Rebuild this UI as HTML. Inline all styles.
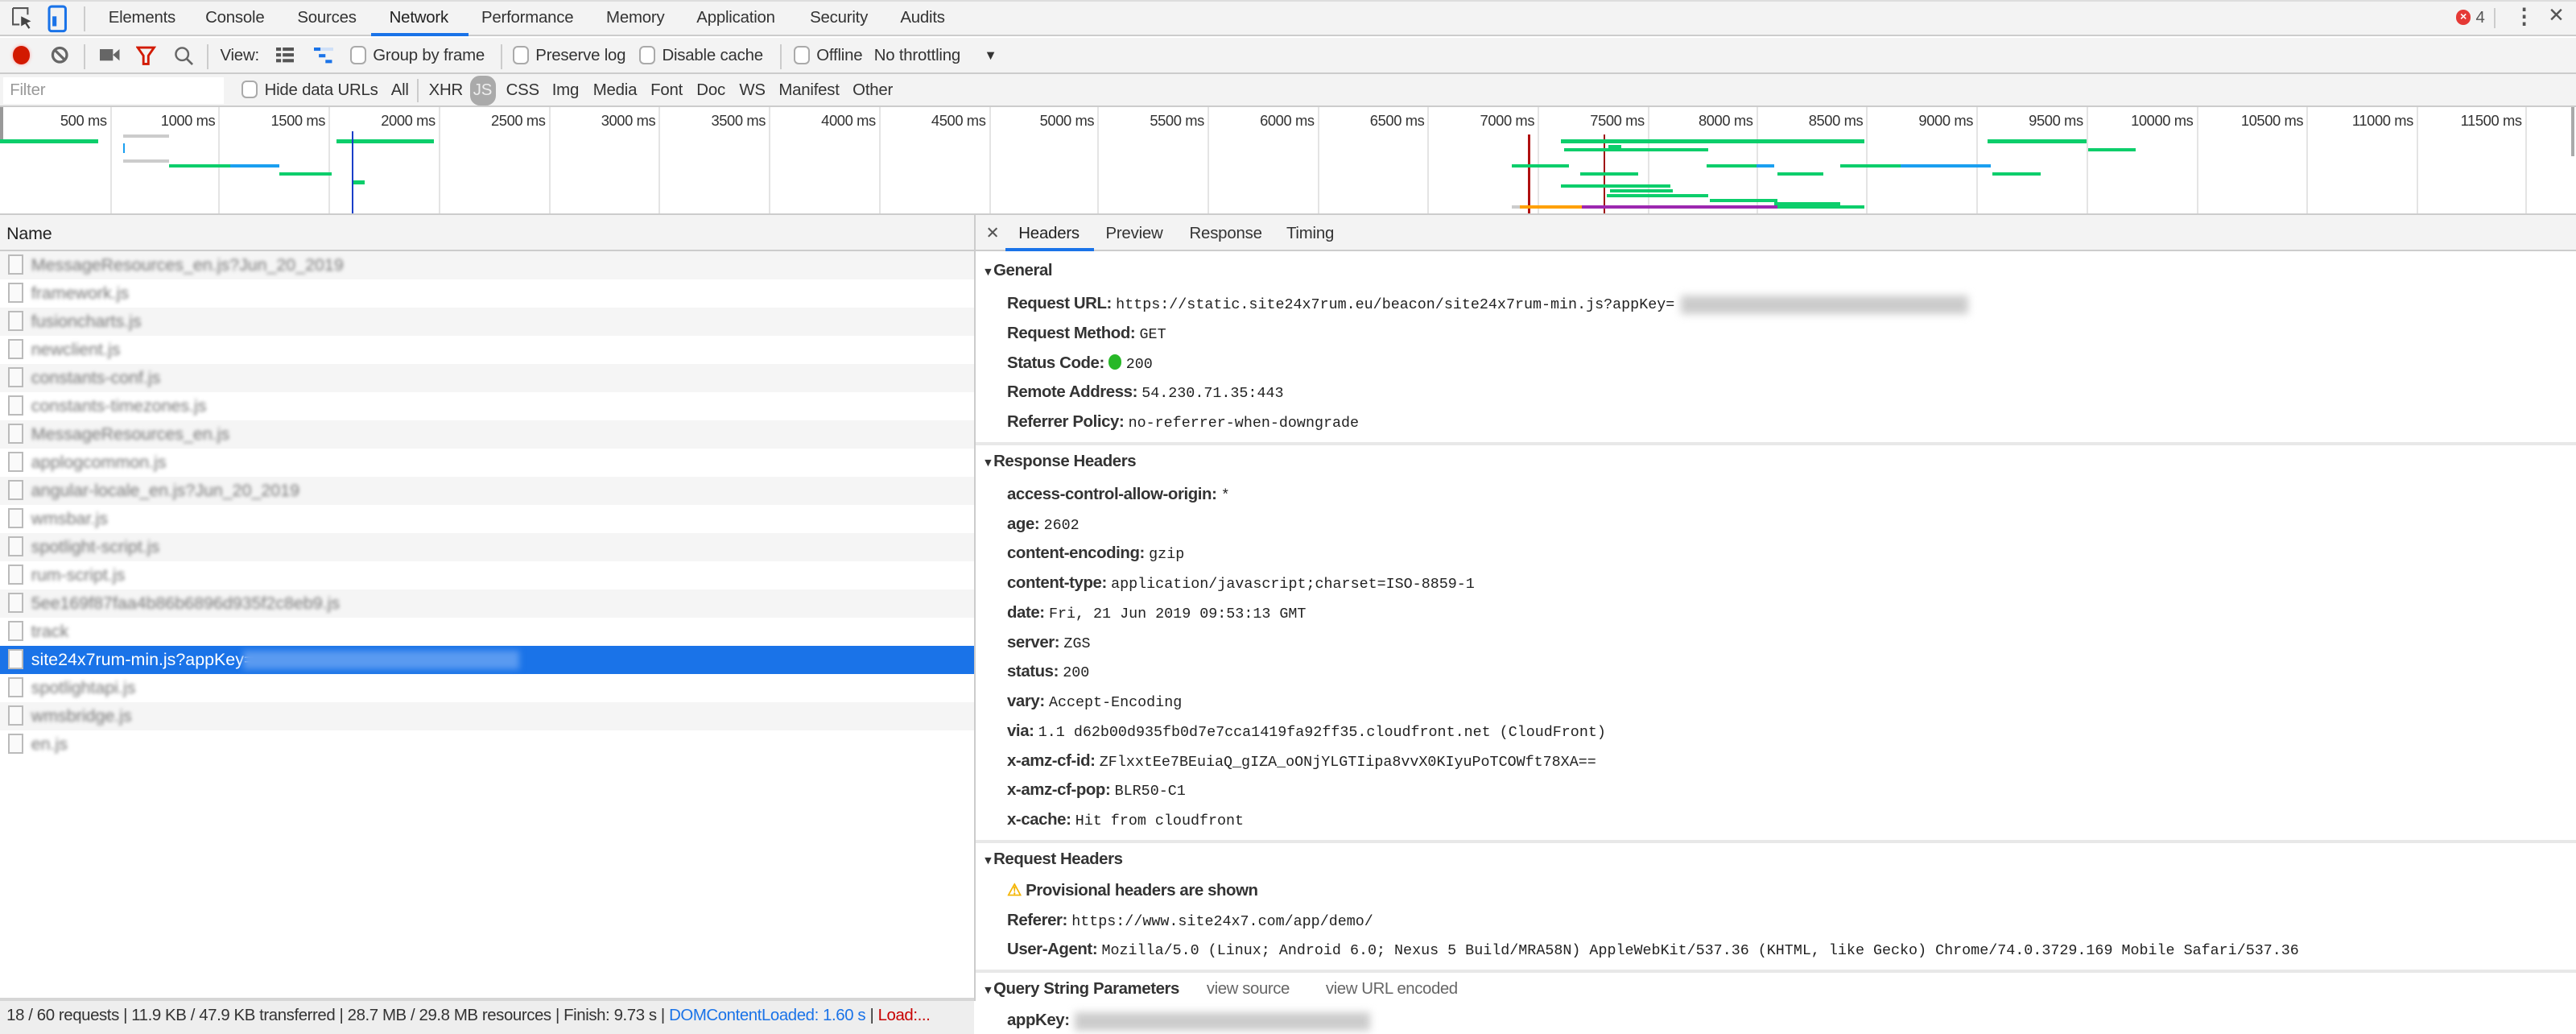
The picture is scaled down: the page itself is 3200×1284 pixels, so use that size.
<!DOCTYPE html>
<html><head><meta charset="utf-8"><style>
*{box-sizing:border-box;margin:0;padding:0}
html,body{width:3200px;height:1284px;overflow:hidden;background:#fff}
#w{zoom:2.0408;width:1568px;height:629px;position:relative;overflow:hidden;font-family:"Liberation Sans",sans-serif;font-size:10px;color:#333}
.a{position:absolute;white-space:nowrap}
.bar{position:absolute;left:0;width:1568px;background:#f3f3f3}
.cb{position:absolute;width:10px;height:11px;border:1px solid #aaa;border-radius:3px;background:#fff}
.t{position:absolute;line-height:14px;white-space:nowrap;font-size:10px;letter-spacing:-0.1px}
.gl{position:absolute;top:65px;height:65px;width:1px;background:#e4e4e4}
.gt{position:absolute;top:68px;font-size:9px;color:#333;text-align:right;width:60px;letter-spacing:-0.2px}
.b{position:absolute;height:2px}
.g{background:#0cce6b}.bl{background:#1a9ff0}.gr{background:#ccc}
.row{position:absolute;left:0;width:593px;height:17.15px}
.row .ic{position:absolute;left:5px;top:2px;width:9px;height:12px;border:1px solid #bbb;background:#fafafa}
.row .nm{position:absolute;left:19px;top:1px;line-height:15px;color:#777;filter:blur(1.1px);font-size:10.5px}
.lab{position:absolute;left:613px;font-weight:bold;font-size:10px;color:#333;white-space:nowrap;line-height:14px;letter-spacing:-0.2px}
.lab span{font-weight:normal;font-family:"Liberation Mono",monospace;font-size:9px;letter-spacing:0;color:#222}
.sec{position:absolute;left:598px;font-weight:bold;font-size:10px;color:#333;line-height:14px;letter-spacing:-0.2px}
.sep{position:absolute;left:594px;width:974px;height:2px;background:#e8e8e8}
</style></head><body><div id="w">
<!-- top tab bar -->
<div class="bar" style="top:0;height:22px;border-bottom:1px solid #ccc;border-top:1px solid #ddd"></div>
<svg class="a" style="left:7px;top:4px" width="14" height="15" viewBox="0 0 14 15"><path d="M1 1h9v4M1 1v10h4" fill="none" stroke="#555" stroke-width="1"/><path d="M6 6l6 3-2.5 1 2 3-1 .6-2-3L6 12z" fill="#444"/></svg>
<svg class="a" style="left:29px;top:3px" width="12" height="17" viewBox="0 0 12 17"><rect x="1" y="1" width="10" height="15" rx="1.5" fill="none" stroke="#1a73e8" stroke-width="1.5"/><rect x="3" y="7" width="2.5" height="6" fill="#1a73e8"/></svg>
<div class="a" style="left:51px;top:4px;width:1px;height:15px;background:#ccc"></div>
<div class="t" style="left:66px;top:4px">Elements</div>
<div class="t" style="left:125px;top:4px">Console</div>
<div class="t" style="left:181px;top:4px">Sources</div>
<div class="t" style="left:237px;top:4px;color:#222">Network</div>
<div class="a" style="left:226px;top:20px;width:59px;height:2px;background:#1a73e8"></div>
<div class="t" style="left:293px;top:4px">Performance</div>
<div class="t" style="left:369px;top:4px">Memory</div>
<div class="t" style="left:424px;top:4px">Application</div>
<div class="t" style="left:493px;top:4px">Security</div>
<div class="t" style="left:548px;top:4px">Audits</div>
<div class="a" style="left:1495px;top:6px;width:9px;height:9px;border-radius:50%;background:#e53935;color:#fff;font-size:7px;line-height:9px;text-align:center;font-weight:bold">×</div>
<div class="t" style="left:1507px;top:4px;color:#555">4</div>
<div class="a" style="left:1518px;top:5px;width:1px;height:12px;background:#ccc"></div>
<div class="t" style="left:1530px;top:3px;font-size:13px;font-weight:bold;color:#555">⋮</div>
<div class="t" style="left:1551px;top:3px;font-size:12px;color:#555">✕</div>
<!-- toolbar -->
<div class="bar" style="top:23px;height:22px;border-bottom:1px solid #ccc"></div>
<div class="a" style="left:8px;top:28px;width:10px;height:11px;border-radius:50%;background:#d21a00;box-shadow:0 0 2px #f99"></div>
<svg class="a" style="left:31px;top:28px" width="11" height="11" viewBox="0 0 11 11"><circle cx="5.5" cy="5.5" r="4.3" fill="none" stroke="#666" stroke-width="1.6"/><path d="M2.5 2.5l6 6" stroke="#666" stroke-width="1.6"/></svg>
<div class="a" style="left:51px;top:27px;width:1px;height:15px;background:#ccc"></div>
<svg class="a" style="left:61px;top:29px" width="12" height="9" viewBox="0 0 12 9"><rect x="0" y="1" width="8" height="7" fill="#666"/><path d="M8 4.5L12 1v7z" fill="#666"/></svg>
<svg class="a" style="left:83px;top:28px" width="12" height="12" viewBox="0 0 12 12"><path d="M1 1h10L7.5 6v5h-3V6z" fill="none" stroke="#d21a00" stroke-width="1.4"/></svg>
<svg class="a" style="left:106px;top:28px" width="12" height="12" viewBox="0 0 12 12"><circle cx="5" cy="5" r="3.8" fill="none" stroke="#666" stroke-width="1.2"/><path d="M7.8 7.8l3.5 3.5" stroke="#666" stroke-width="1.3"/></svg>
<div class="a" style="left:126px;top:27px;width:1px;height:15px;background:#ccc"></div>
<div class="t" style="left:134px;top:27px">View:</div>
<svg class="a" style="left:168px;top:29px" width="11" height="9" viewBox="0 0 11 9"><path d="M0 0h3v2H0zM4 0h7v2H4zM0 3.5h3v2H0zM4 3.5h7v2H4zM0 7h3v2H0zM4 7h7v2H4z" fill="#555"/></svg>
<svg class="a" style="left:191px;top:29px" width="12" height="10" viewBox="0 0 12 10"><rect x="0" y="0" width="4" height="2" fill="#1a73e8"/><rect x="4" y="0" width="8" height="2" fill="#cfe0f8"/><rect x="3" y="4" width="4" height="2" fill="#1a73e8"/><rect x="7" y="7.5" width="4" height="2" fill="#1a73e8"/></svg>
<div class="cb" style="left:213px;top:28px"></div>
<div class="t" style="left:227px;top:27px">Group by frame</div>
<div class="a" style="left:305px;top:27px;width:1px;height:15px;background:#ccc"></div>
<div class="cb" style="left:312px;top:28px"></div>
<div class="t" style="left:326px;top:27px">Preserve log</div>
<div class="cb" style="left:389px;top:28px"></div>
<div class="t" style="left:403px;top:27px">Disable cache</div>
<div class="a" style="left:475px;top:27px;width:1px;height:15px;background:#ccc"></div>
<div class="cb" style="left:483px;top:28px"></div>
<div class="t" style="left:497px;top:27px">Offline</div>
<div class="t" style="left:532px;top:27px">No throttling</div>
<div class="t" style="left:599px;top:27px;font-size:8px">▼</div>
<!-- filter row -->
<div class="bar" style="top:45px;height:20px;border-bottom:1px solid #ccc"></div>
<div class="a" style="left:2px;top:47px;width:134px;height:16px;background:#fff"></div>
<div class="t" style="left:6px;top:48px;color:#999">Filter</div>
<div class="cb" style="left:147px;top:49px"></div>
<div class="t" style="left:161px;top:48px">Hide data URLs</div>
<div class="t" style="left:238px;top:48px">All</div>
<div class="a" style="left:254px;top:48px;width:1px;height:14px;background:#ccc"></div>
<div class="t" style="left:261px;top:48px">XHR</div>
<div class="a" style="left:286px;top:46px;width:16px;height:18px;border-radius:6px;background:#aaa"></div>
<div class="t" style="left:288px;top:48px;color:#eee">JS</div>
<div class="t" style="left:308px;top:48px">CSS</div>
<div class="t" style="left:336px;top:48px">Img</div>
<div class="t" style="left:361px;top:48px">Media</div>
<div class="t" style="left:396px;top:48px">Font</div>
<div class="t" style="left:424px;top:48px">Doc</div>
<div class="t" style="left:450px;top:48px">WS</div>
<div class="t" style="left:474px;top:48px">Manifest</div>
<div class="t" style="left:519px;top:48px">Other</div>
<!-- timeline -->
<div class="a" style="left:0;top:65px;width:1568px;height:66px;background:#fff;border-bottom:1px solid #ccc"></div>
<div class="a" style="left:0;top:65px;width:2px;height:20px;background:#999"></div>
<div class="a" style="left:1565px;top:65px;width:2px;height:30px;background:#aaa"></div>
<div class="gl" style="left:67px"></div><div class="gt" style="left:5px">500 ms</div>
<div class="gl" style="left:133px"></div><div class="gt" style="left:71px">1000 ms</div>
<div class="gl" style="left:200px"></div><div class="gt" style="left:138px">1500 ms</div>
<div class="gl" style="left:267px"></div><div class="gt" style="left:205px">2000 ms</div>
<div class="gl" style="left:334px"></div><div class="gt" style="left:272px">2500 ms</div>
<div class="gl" style="left:401px"></div><div class="gt" style="left:339px">3000 ms</div>
<div class="gl" style="left:468px"></div><div class="gt" style="left:406px">3500 ms</div>
<div class="gl" style="left:535px"></div><div class="gt" style="left:473px">4000 ms</div>
<div class="gl" style="left:602px"></div><div class="gt" style="left:540px">4500 ms</div>
<div class="gl" style="left:668px"></div><div class="gt" style="left:606px">5000 ms</div>
<div class="gl" style="left:735px"></div><div class="gt" style="left:673px">5500 ms</div>
<div class="gl" style="left:802px"></div><div class="gt" style="left:740px">6000 ms</div>
<div class="gl" style="left:869px"></div><div class="gt" style="left:807px">6500 ms</div>
<div class="gl" style="left:936px"></div><div class="gt" style="left:874px">7000 ms</div>
<div class="gl" style="left:1003px"></div><div class="gt" style="left:941px">7500 ms</div>
<div class="gl" style="left:1069px"></div><div class="gt" style="left:1007px">8000 ms</div>
<div class="gl" style="left:1136px"></div><div class="gt" style="left:1074px">8500 ms</div>
<div class="gl" style="left:1203px"></div><div class="gt" style="left:1141px">9000 ms</div>
<div class="gl" style="left:1270px"></div><div class="gt" style="left:1208px">9500 ms</div>
<div class="gl" style="left:1337px"></div><div class="gt" style="left:1275px">10000 ms</div>
<div class="gl" style="left:1404px"></div><div class="gt" style="left:1342px">10500 ms</div>
<div class="gl" style="left:1471px"></div><div class="gt" style="left:1409px">11000 ms</div>
<div class="gl" style="left:1537px"></div><div class="gt" style="left:1475px">11500 ms</div>
<div class="b g" style="left:0;top:85px;width:60px"></div>
<div class="b gr" style="left:75px;top:82px;width:28px"></div>
<div class="b bl" style="left:75px;top:87px;width:1px;height:6px"></div>
<div class="b gr" style="left:75px;top:97px;width:28px"></div>
<div class="b g" style="left:103px;top:100px;width:37px"></div>
<div class="b bl" style="left:140px;top:100px;width:30px"></div>
<div class="b g" style="left:170px;top:105px;width:32px"></div>
<div class="b g" style="left:205px;top:85px;width:59px"></div>
<div class="b g" style="left:214px;top:110px;width:8px"></div>
<div class="a" style="left:214px;top:80px;width:1px;height:50px;background:#1a3fc8"></div>
<div class="a" style="left:930px;top:82px;width:1.5px;height:48px;background:#b01010"></div>
<div class="a" style="left:976px;top:82px;width:1px;height:48px;background:#a01010"></div>
<div class="b g" style="left:950px;top:85px;width:185px"></div>
<div class="b g" style="left:1210px;top:85px;width:60px"></div>
<div class="b g" style="left:979px;top:88px;width:8px"></div>
<div class="b g" style="left:952px;top:90px;width:88px"></div>
<div class="b g" style="left:1271px;top:90px;width:29px"></div>
<div class="b g" style="left:920px;top:100px;width:35px"></div>
<div class="b g" style="left:1039px;top:100px;width:30px"></div>
<div class="b bl" style="left:1069px;top:100px;width:11px"></div>
<div class="b g" style="left:1120px;top:100px;width:37px"></div>
<div class="b bl" style="left:1157px;top:100px;width:55px"></div>
<div class="b g" style="left:962px;top:105px;width:35px"></div>
<div class="b g" style="left:1082px;top:105px;width:28px"></div>
<div class="b g" style="left:1213px;top:105px;width:29px"></div>
<div class="b g" style="left:950px;top:112px;width:67px"></div>
<div class="b g" style="left:980px;top:115px;width:38px"></div>
<div class="b g" style="left:978px;top:118px;width:62px"></div>
<div class="b g" style="left:1041px;top:121px;width:41px"></div>
<div class="b g" style="left:1080px;top:123px;width:40px"></div>
<div class="b gr" style="left:920px;top:125px;width:5px"></div>
<div class="b" style="left:925px;top:125px;width:38px;background:#ffa000"></div>
<div class="b" style="left:963px;top:125px;width:119px;background:#9c27b0"></div>
<div class="b g" style="left:1082px;top:125px;width:53px"></div>
<!-- left list header -->
<div class="a" style="left:0;top:131px;width:593px;height:22px;background:#f3f3f3;border-bottom:1px solid #ccc"></div>
<div class="t" style="left:4px;top:135px;color:#222;font-size:10.5px">Name</div>
<div class="a" style="left:593px;top:131px;width:1px;height:478px;background:#ccc"></div>
<div class="row" style="top:153px;background:#f5f5f5"><div class="ic"></div><div class="nm">MessageResources_en.js?Jun_20_2019</div></div>
<div class="row" style="top:170.15px"><div class="ic"></div><div class="nm">framework.js</div></div>
<div class="row" style="top:187.3px;background:#f5f5f5"><div class="ic"></div><div class="nm">fusioncharts.js</div></div>
<div class="row" style="top:204.45px"><div class="ic"></div><div class="nm">newclient.js</div></div>
<div class="row" style="top:221.6px;background:#f5f5f5"><div class="ic"></div><div class="nm">constants-conf.js</div></div>
<div class="row" style="top:238.75px"><div class="ic"></div><div class="nm">constants-timezones.js</div></div>
<div class="row" style="top:255.9px;background:#f5f5f5"><div class="ic"></div><div class="nm">MessageResources_en.js</div></div>
<div class="row" style="top:273.05px"><div class="ic"></div><div class="nm">applogcommon.js</div></div>
<div class="row" style="top:290.2px;background:#f5f5f5"><div class="ic"></div><div class="nm">angular-locale_en.js?Jun_20_2019</div></div>
<div class="row" style="top:307.35px"><div class="ic"></div><div class="nm">wmsbar.js</div></div>
<div class="row" style="top:324.5px;background:#f5f5f5"><div class="ic"></div><div class="nm">spotlight-script.js</div></div>
<div class="row" style="top:341.65px"><div class="ic"></div><div class="nm">rum-script.js</div></div>
<div class="row" style="top:358.8px;background:#f5f5f5"><div class="ic"></div><div class="nm">5ee169f87faa4b86b6896d935f2c8eb9.js</div></div>
<div class="row" style="top:375.95px"><div class="ic"></div><div class="nm">track</div></div>
<div class="row" style="top:393.1px;background:#1a73e8"><div class="ic"></div><div class="nm" style="color:#fff;filter:none">site24x7rum-min.js?appKey=</div><div class="a" style="left:148px;top:3px;width:168px;height:11px;background:#5a9af0;filter:blur(2px)"></div></div>
<div class="row" style="top:410.25px"><div class="ic"></div><div class="nm">spotlightapi.js</div></div>
<div class="row" style="top:427.4px;background:#f5f5f5"><div class="ic"></div><div class="nm">wmsbridge.js</div></div>
<div class="row" style="top:444.55px"><div class="ic"></div><div class="nm">en.js</div></div>
<!-- status bar -->
<div class="a" style="left:0;top:607px;width:593px;height:22px;background:#eee;border-top:2px solid #d6d6d6"></div>
<div class="t" style="left:4px;top:611px;width:588px;overflow:hidden;color:#333;letter-spacing:-0.2px">18 / 60 requests | 11.9 KB / 47.9 KB transferred | 28.7 MB / 29.8 MB resources | Finish: 9.73 s | <span style="color:#1a73e8">DOMContentLoaded: 1.60 s</span> | <span style="color:#c80000">Load:...</span></div>
<!-- right panel -->
<div class="a" style="left:594px;top:131px;width:974px;height:22px;background:#f3f3f3;border-bottom:1px solid #ccc"></div>
<div class="t" style="left:600px;top:135px;color:#555">✕</div>
<div class="t" style="left:620px;top:135px;color:#222">Headers</div>
<div class="a" style="left:612px;top:151px;width:54px;height:2px;background:#1a73e8"></div>
<div class="t" style="left:673px;top:135px">Preview</div>
<div class="t" style="left:724px;top:135px">Response</div>
<div class="t" style="left:783px;top:135px">Timing</div>
<div class="sec" style="top:158px"><span style="font-size:7px">▼</span>General</div>
<div class="lab" style="top:178px">Request URL: <span>https://static.site24x7rum.eu/beacon/site24x7rum-min.js?appKey=</span></div>
<div class="a" style="left:1023px;top:180px;width:175px;height:11px;background:#ccc;filter:blur(2.5px)"></div>
<div class="lab" style="top:196px">Request Method: <span>GET</span></div>
<div class="lab" style="top:214px">Status Code: <i style="display:inline-block;width:8px;height:9px;border-radius:50%;background:#27b827;vertical-align:-1px"></i> <span>200</span></div>
<div class="lab" style="top:232px">Remote Address: <span>54.230.71.35:443</span></div>
<div class="lab" style="top:250px">Referrer Policy: <span>no-referrer-when-downgrade</span></div>
<div class="sep" style="top:269px"></div>
<div class="sec" style="top:274px"><span style="font-size:7px">▼</span>Response Headers</div>
<div class="lab" style="top:294px">access-control-allow-origin: <span>*</span></div>
<div class="lab" style="top:312px">age: <span>2602</span></div>
<div class="lab" style="top:330px">content-encoding: <span>gzip</span></div>
<div class="lab" style="top:348px">content-type: <span>application/javascript;charset=ISO-8859-1</span></div>
<div class="lab" style="top:366px">date: <span>Fri, 21 Jun 2019 09:53:13 GMT</span></div>
<div class="lab" style="top:384px">server: <span>ZGS</span></div>
<div class="lab" style="top:402px">status: <span>200</span></div>
<div class="lab" style="top:420px">vary: <span>Accept-Encoding</span></div>
<div class="lab" style="top:438px">via: <span>1.1 d62b00d935fb0d7e7cca1419fa92ff35.cloudfront.net (CloudFront)</span></div>
<div class="lab" style="top:456px">x-amz-cf-id: <span>ZFlxxtEe7BEuiaQ_gIZA_oONjYLGTIipa8vvX0KIyuPoTCOWft78XA==</span></div>
<div class="lab" style="top:474px">x-amz-cf-pop: <span>BLR50-C1</span></div>
<div class="lab" style="top:492px">x-cache: <span>Hit from cloudfront</span></div>
<div class="sep" style="top:511px"></div>
<div class="sec" style="top:516px"><span style="font-size:7px">▼</span>Request Headers</div>
<div class="lab" style="top:535px"><b style="color:#f4b400;font-size:10px">⚠</b> Provisional headers are shown</div>
<div class="lab" style="top:553px">Referer: <span>https://www.site24x7.com/app/demo/</span></div>
<div class="lab" style="top:571px">User-Agent: <span>Mozilla/5.0 (Linux; Android 6.0; Nexus 5 Build/MRA58N) AppleWebKit/537.36 (KHTML, like Gecko) Chrome/74.0.3729.169 Mobile Safari/537.36</span></div>
<div class="sep" style="top:590px"></div>
<div class="sec" style="top:595px"><span style="font-size:7px">▼</span>Query String Parameters <span style="font-weight:normal;color:#666;margin-left:14px">view source</span><span style="font-weight:normal;color:#666;margin-left:22px">view URL encoded</span></div>
<div class="lab" style="top:614px">appKey:</div>
<div class="a" style="left:654px;top:616px;width:180px;height:11px;background:#ccc;filter:blur(2.5px)"></div>
</div></body></html>
